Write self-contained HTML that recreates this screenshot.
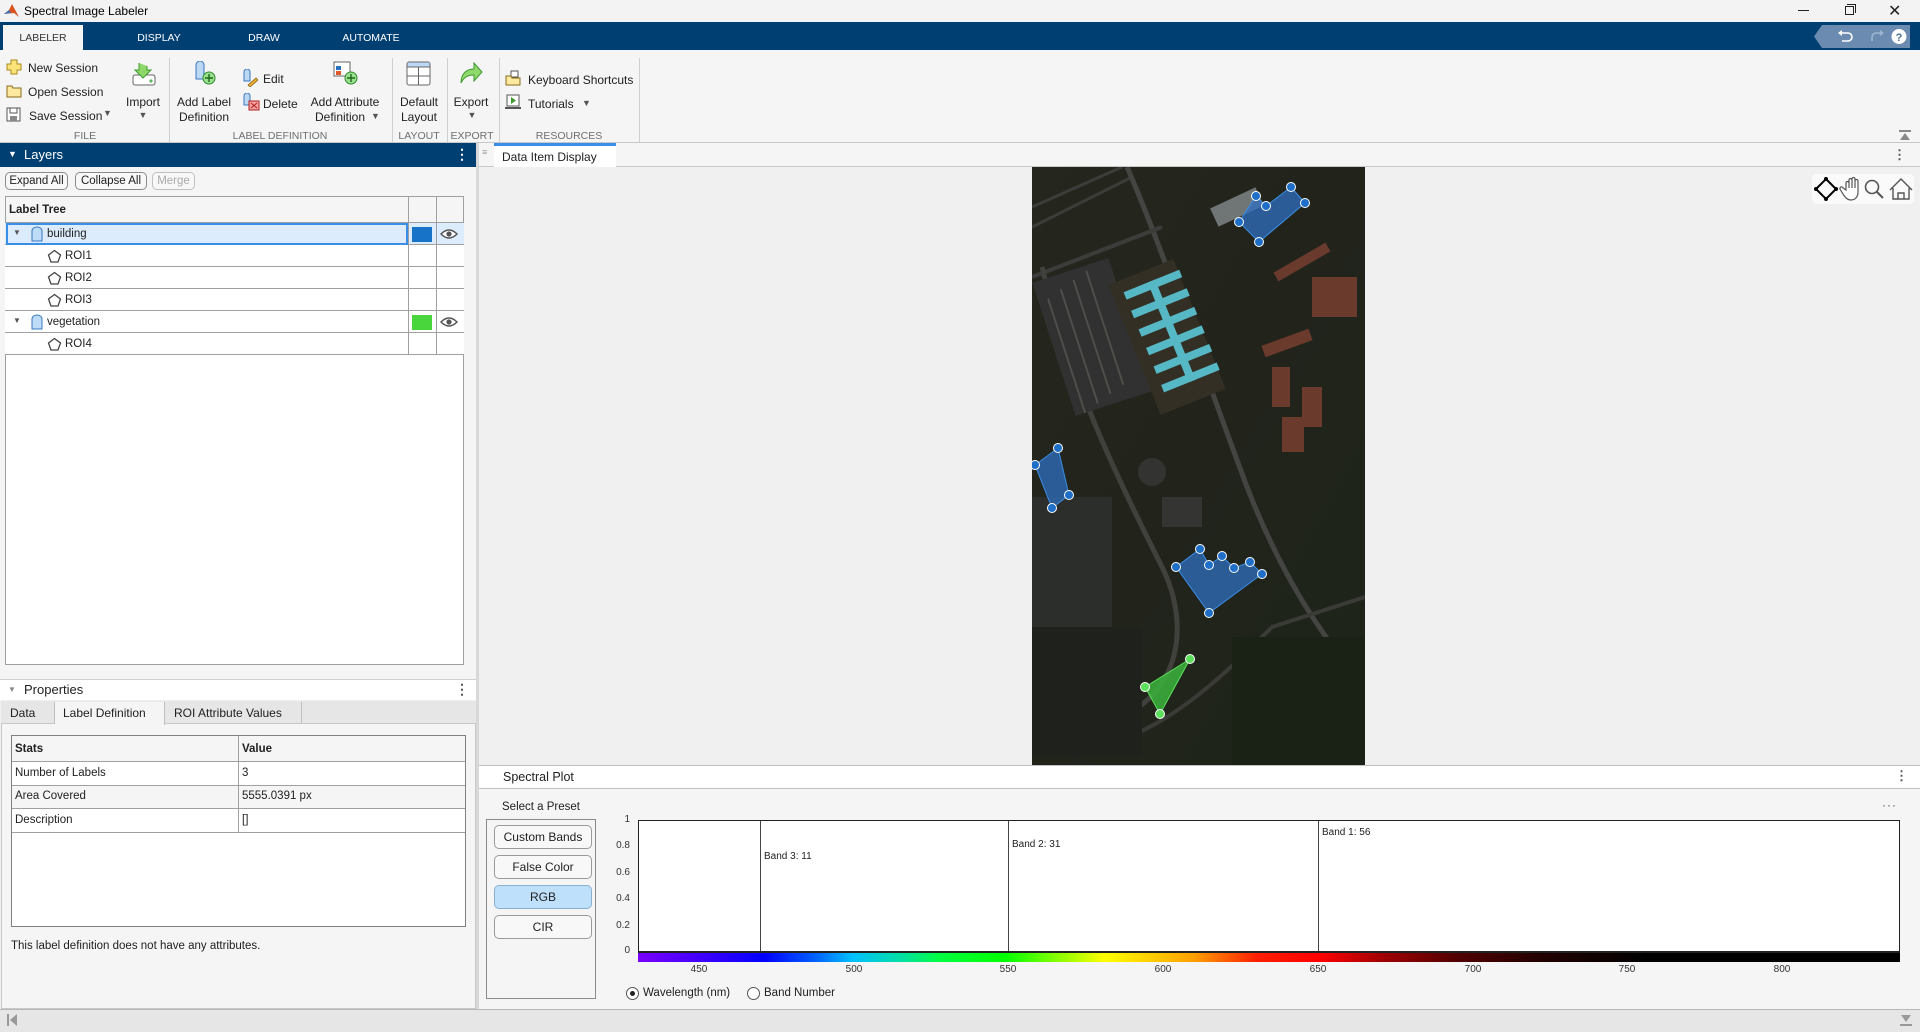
<!DOCTYPE html>
<html><head><meta charset="utf-8"><style>
*{box-sizing:border-box;margin:0;padding:0}
body{width:1920px;height:1032px;position:relative;overflow:hidden;background:#f0f0f0;font-family:"Liberation Sans",sans-serif;font-size:12px;color:#212121}
.a{position:absolute}
.t{position:absolute;white-space:nowrap}
.sep{position:absolute;top:58px;width:1px;height:84px;background:#d0d0d0}
.sec{position:absolute;top:130px;font-size:10.5px;color:#6e6e6e;transform:translateX(-50%)}
.ctr{transform:translateX(-50%);text-align:center}
.btn{position:absolute;height:18px;border:1px solid #8a8a8a;border-radius:5px;background:#f8f8f8;font-size:11.5px;text-align:center;line-height:16px}
.row{position:absolute;left:5px;width:459px;height:22px;border-bottom:1px solid #a0a0a0;background:#fff}
.row .c1{position:absolute;left:403px;top:0;width:1px;height:22px;background:#a0a0a0}
.row .c2{position:absolute;left:431px;top:0;width:1px;height:22px;background:#a0a0a0}
.pb{position:absolute;left:494px;width:98px;height:24px;border:1px solid #9a9a9a;border-radius:5px;background:#f8f8f8;text-align:center;line-height:22px;font-size:12px}
.yl{position:absolute;right:1290px;font-size:10px;color:#333}
.xl{position:absolute;top:964px;font-size:10px;color:#333;transform:translateX(-50%)}
</style></head><body>

<div class="a" style="left:0;top:0;width:1920px;height:22px;background:#f3f3f3"></div>
<svg class="a" style="left:4px;top:4px" width="15" height="14" viewBox="0 0 15 14"><path d="M0 10 L5 6 L8 0 L15 13 L10 9 Z" fill="#d9531e"/><path d="M0 10 L5 6 L7 9 Z" fill="#3c74b5"/></svg>
<div class="t" style="left:24px;top:4px;font-size:12px;color:#000">Spectral Image Labeler</div>
<div class="a" style="left:1798px;top:10px;width:11px;height:1px;background:#222"></div>
<div class="a" style="left:1845px;top:6px;width:9px;height:9px;border:1px solid #222"></div>
<div class="a" style="left:1847px;top:4px;width:9px;height:9px;border-top:1px solid #222;border-right:1px solid #222"></div>
<div class="t" style="left:1888px;top:1px;font-size:16px;color:#222">✕</div>

<div class="a" style="left:0;top:22px;width:1920px;height:28px;background:#003f72"></div>
<div class="a" style="left:3px;top:25px;width:80px;height:25px;background:#f5f5f5"></div>
<div class="t ctr" style="left:43px;top:32px;font-size:10.5px;color:#333">LABELER</div>
<div class="t ctr" style="left:159px;top:32px;font-size:10.5px;color:#fff">DISPLAY</div>
<div class="t ctr" style="left:264px;top:32px;font-size:10.5px;color:#fff">DRAW</div>
<div class="t ctr" style="left:371px;top:32px;font-size:10.5px;color:#fff">AUTOMATE</div>
<svg class="a" style="left:1814px;top:25px" width="96" height="23"><path d="M8 0 H96 V23 H8 L0 11.5 Z" fill="#6b8cb0"/><path d="M26 8 h8 a4 4 0 0 1 0 8 h-6" stroke="#fff" stroke-width="1.6" fill="none"/><path d="M24 8 l4 -3 v6 z" fill="#fff"/><path d="M58 16 v-4 a4 4 0 0 1 4 -4 h6" stroke="#9fb6cf" stroke-width="1.6" fill="none"/><path d="M70 8 l-4 -3 v6z" fill="#9fb6cf"/><circle cx="85" cy="11.5" r="7.5" fill="#fff"/><text x="85" y="16" font-size="11" font-weight="bold" text-anchor="middle" fill="#4a6f96" font-family="Liberation Sans">?</text></svg>

<div class="a" style="left:0;top:50px;width:1920px;height:93px;background:#f5f5f5;border-bottom:1px solid #c8c8c8"></div>
<svg class="a" style="left:6px;top:59px" width="16" height="16"><path d="M5 1h6v4h4v6h-4v4H5v-4H1V5h4z" fill="#fde47a" stroke="#a88a1a"/></svg>
<div class="t" style="left:28px;top:61px">New Session</div>
<svg class="a" style="left:6px;top:84px" width="16" height="14"><path d="M1 2h5l1 2h8v9H1z" fill="#fde9a0" stroke="#8a6a1a"/></svg>
<div class="t" style="left:28px;top:85px">Open Session</div>
<svg class="a" style="left:6px;top:107px" width="15" height="15"><rect x="1" y="1" width="13" height="13" fill="#fff" stroke="#555"/><rect x="4" y="1" width="7" height="5" fill="none" stroke="#555"/><rect x="4" y="9" width="7" height="5" fill="#888"/></svg>
<div class="t" style="left:29px;top:109px">Save Session</div>
<div class="t" style="left:103px;top:108px;font-size:9px;color:#555">▼</div>
<svg class="a" style="left:131px;top:61px" width="26" height="26"><rect x="2" y="14" width="22" height="10" rx="2" fill="#fff" stroke="#666"/><circle cx="20" cy="20" r="1.6" fill="#5cb85c"/><path d="M8 2 v7 h-4 l8 8 l8 -8 h-4 v-4" fill="#8fd86b" stroke="#3e9a2f"/></svg>
<div class="t ctr" style="left:143px;top:95px">Import</div>
<div class="t ctr" style="left:143px;top:110px;font-size:9px;color:#555">▼</div>
<div class="sep" style="left:169px"></div>
<svg class="a" style="left:193px;top:61px" width="26" height="26"><path d="M3 4 a4 4 0 0 1 8 0 v14 h-8z" fill="#bcd8f5" stroke="#3a78c0"/><circle cx="16" cy="17" r="6" fill="#9be08c" stroke="#2e8a2e"/><path d="M16 13v8M12 17h8" stroke="#1d6a1d" stroke-width="1.4"/></svg>
<div class="t ctr" style="left:204px;top:95px;line-height:15px">Add Label<br>Definition</div>
<svg class="a" style="left:242px;top:69px" width="16" height="18"><path d="M2 3 a3 3 0 0 1 6 0 v9 h-6z" fill="#bcd8f5" stroke="#3a78c0"/><path d="M6 16 l8 -7 l2 2 l-8 7 z" fill="#f0b030" stroke="#7a5a10" stroke-width=".7"/></svg>
<div class="t" style="left:263px;top:72px">Edit</div>
<svg class="a" style="left:242px;top:93px" width="18" height="18"><path d="M2 3 a3 3 0 0 1 6 0 v9 h-6z" fill="#bcd8f5" stroke="#3a78c0"/><rect x="7" y="8" width="10" height="9" fill="#f4a0a0" stroke="#b02020"/><path d="M9 10l6 5M15 10l-6 5" stroke="#b02020"/></svg>
<div class="t" style="left:263px;top:97px">Delete</div>
<svg class="a" style="left:333px;top:61px" width="26" height="26"><rect x="1" y="1" width="16" height="14" fill="#fff" stroke="#666"/><rect x="3" y="5" width="5" height="4" fill="#2a70c0"/><rect x="3" y="10" width="5" height="4" fill="#e0582a"/><circle cx="18" cy="17" r="6" fill="#9be08c" stroke="#2e8a2e"/><path d="M18 13v8M14 17h8" stroke="#1d6a1d" stroke-width="1.4"/></svg>
<div class="t ctr" style="left:345px;top:95px;line-height:15px">Add Attribute<br>Definition&nbsp;&nbsp;&nbsp;</div>
<div class="t" style="left:371px;top:111px;font-size:9px;color:#555">▼</div>
<div class="sep" style="left:392px"></div>
<svg class="a" style="left:406px;top:61px" width="26" height="26"><rect x="1" y="1" width="23" height="23" rx="2" fill="#fff" stroke="#666"/><rect x="1.5" y="1.5" width="22" height="4" fill="#bcd8f5"/><path d="M1 6h23M12.5 6v18M1 15h23" stroke="#666"/></svg>
<div class="t ctr" style="left:419px;top:95px;line-height:15px">Default<br>Layout</div>
<div class="sep" style="left:447px"></div>
<svg class="a" style="left:458px;top:61px" width="26" height="24"><path d="M3 22 c0 -10 6 -14 13 -14 v-6 l8 9 l-8 9 v-6 c-6 0 -10 2 -13 8z" fill="#8fd86b" stroke="#3e9a2f"/></svg>
<div class="t ctr" style="left:471px;top:95px">Export</div>
<div class="t ctr" style="left:472px;top:110px;font-size:9px;color:#555">▼</div>
<div class="sep" style="left:499px"></div>
<svg class="a" style="left:505px;top:70px" width="16" height="16"><rect x="6" y="1" width="7" height="6" fill="#fff" stroke="#555"/><path d="M1 6h5l1 2h8v7H1z" fill="#fde9a0" stroke="#8a6a1a"/></svg>
<div class="t" style="left:528px;top:73px">Keyboard Shortcuts</div>
<svg class="a" style="left:505px;top:94px" width="16" height="16"><rect x="2" y="1" width="12" height="11" fill="#fff" stroke="#555"/><path d="M6 3v7l5-3.5z" fill="#3e9a2f"/><path d="M0 14h16" stroke="#555" stroke-width="2"/></svg>
<div class="t" style="left:528px;top:97px">Tutorials</div>
<div class="t" style="left:582px;top:98px;font-size:9px;color:#555">▼</div>
<div class="sep" style="left:639px"></div>
<div class="sec" style="left:85px">FILE</div>
<div class="sec" style="left:280px">LABEL DEFINITION</div>
<div class="sec" style="left:419px">LAYOUT</div>
<div class="sec" style="left:472px">EXPORT</div>
<div class="sec" style="left:569px">RESOURCES</div>
<svg class="a" style="left:1899px;top:130px" width="12" height="10"><path d="M0 1h12" stroke="#888" stroke-width="2"/><path d="M1 10 L6 3 L11 10z" fill="#888"/></svg>

<div class="a" style="left:0;top:143px;width:476px;height:24px;background:#003f72"></div>
<div class="t" style="left:8px;top:149px;font-size:9px;color:#fff">▼</div>
<div class="t" style="left:24px;top:147px;font-size:13px;color:#fff">Layers</div>
<div class="t" style="left:455px;top:146px;font-size:14px;color:#fff;font-weight:bold">⋮</div>
<div class="a" style="left:0;top:167px;width:476px;height:512px;background:#f5f5f5"></div>
<div class="btn" style="left:5px;top:172px;width:63px">Expand All</div>
<div class="btn" style="left:75px;top:172px;width:72px">Collapse All</div>
<div class="btn" style="left:152px;top:172px;width:43px;color:#aaa;border-color:#c0c0c0">Merge</div>
<div class="a" style="left:5px;top:196px;width:459px;height:469px;background:#fff;border:1px solid #a0a0a0"></div>
<div class="a" style="left:5px;top:196px;width:459px;height:27px;background:#f5f5f5;border:1px solid #a0a0a0"></div>
<div class="a" style="left:408px;top:196px;width:1px;height:159px;background:#a0a0a0"></div>
<div class="a" style="left:436px;top:196px;width:1px;height:159px;background:#a0a0a0"></div>
<div class="t" style="left:9px;top:204px;font-weight:bold;font-size:11.5px">Label Tree</div>

<div class="row" style="top:223px;background:#dcecfc"><div class="c1"></div><div class="c2"></div></div>
<div class="a" style="left:6px;top:223px;width:402px;height:22px;border:2px solid #3a8ee6"></div>
<div class="a" style="left:412px;top:227px;width:20px;height:15px;background:#1673c8"></div>
<div class="row" style="top:245px"><div class="c1"></div><div class="c2"></div></div>
<div class="row" style="top:267px"><div class="c1"></div><div class="c2"></div></div>
<div class="row" style="top:289px"><div class="c1"></div><div class="c2"></div></div>
<div class="row" style="top:311px"><div class="c1"></div><div class="c2"></div></div>
<div class="a" style="left:412px;top:315px;width:20px;height:15px;background:#48d63c"></div>
<div class="row" style="top:333px"><div class="c1"></div><div class="c2"></div></div>
<svg class="a" style="left:440px;top:228px" width="18" height="12"><path d="M1 6 Q9 -2 17 6 Q9 14 1 6z" fill="#fff" stroke="#555" stroke-width="1.5"/><circle cx="9" cy="6" r="2.6" fill="#555"/></svg>
<svg class="a" style="left:440px;top:316px" width="18" height="12"><path d="M1 6 Q9 -2 17 6 Q9 14 1 6z" fill="#fff" stroke="#555" stroke-width="1.5"/><circle cx="9" cy="6" r="2.6" fill="#555"/></svg>
<div class="t" style="left:13px;top:228px;font-size:8px;color:#555">▼</div>
<svg class="a" style="left:31px;top:226px" width="12" height="16"><path d="M1 15V5a5 4 0 0 1 10 0v10z" fill="#bcdcf8" stroke="#3a78c0"/></svg>
<div class="t" style="left:47px;top:228px;font-size:11.5px">building</div>
<div class="t" style="left:13px;top:316px;font-size:8px;color:#555">▼</div>
<svg class="a" style="left:31px;top:314px" width="12" height="16"><path d="M1 15V5a5 4 0 0 1 10 0v10z" fill="#bcdcf8" stroke="#3a78c0"/></svg>
<div class="t" style="left:47px;top:316px;font-size:11.5px">vegetation</div>
<svg class="a" style="left:47px;top:249px" width="15" height="15"><path d="M7.5 1.5L13.5 6 11 13H4L1.5 6z" fill="#fff" stroke="#444" stroke-width="1.3"/></svg><div class="t" style="left:65px;top:250px;font-size:11.5px">ROI1</div>
<svg class="a" style="left:47px;top:271px" width="15" height="15"><path d="M7.5 1.5L13.5 6 11 13H4L1.5 6z" fill="#fff" stroke="#444" stroke-width="1.3"/></svg><div class="t" style="left:65px;top:272px;font-size:11.5px">ROI2</div>
<svg class="a" style="left:47px;top:293px" width="15" height="15"><path d="M7.5 1.5L13.5 6 11 13H4L1.5 6z" fill="#fff" stroke="#444" stroke-width="1.3"/></svg><div class="t" style="left:65px;top:294px;font-size:11.5px">ROI3</div>
<svg class="a" style="left:47px;top:337px" width="15" height="15"><path d="M7.5 1.5L13.5 6 11 13H4L1.5 6z" fill="#fff" stroke="#444" stroke-width="1.3"/></svg><div class="t" style="left:65px;top:338px;font-size:11.5px">ROI4</div>

<div class="a" style="left:0;top:679px;width:476px;height:21px;background:#fff;border-top:1px solid #d0d0d0"></div>
<div class="t" style="left:8px;top:685px;font-size:8px;color:#888">▼</div>
<div class="t" style="left:24px;top:682px;font-size:13px">Properties</div>
<div class="t" style="left:455px;top:681px;font-size:14px;color:#555;font-weight:bold">⋮</div>
<div class="a" style="left:1px;top:701px;width:475px;height:308px;background:#f5f5f5;border:1px solid #c8c8c8"></div>
<div class="a" style="left:1px;top:701px;width:475px;height:23px;background:#e6e6e6;border-bottom:1px solid #c8c8c8"></div>
<div class="a" style="left:54px;top:702px;width:1px;height:22px;background:#c0c0c0"></div>
<div class="a" style="left:55px;top:702px;width:110px;height:23px;background:#f5f5f5;border-right:1px solid #c0c0c0"></div>
<div class="a" style="left:301px;top:702px;width:1px;height:22px;background:#c0c0c0"></div>
<div class="t" style="left:10px;top:706px;font-size:12px">Data</div>
<div class="t" style="left:63px;top:706px;font-size:12px">Label Definition</div>
<div class="t" style="left:174px;top:706px;font-size:12px">ROI Attribute Values</div>
<div class="a" style="left:11px;top:735px;width:455px;height:192px;background:#fff;border:1px solid #808080"></div>
<div class="a" style="left:12px;top:736px;width:453px;height:26px;background:#f5f5f5;border-bottom:1px solid #a0a0a0"></div>
<div class="a" style="left:12px;top:785px;width:453px;height:23px;background:#f5f5f5"></div>
<div class="a" style="left:12px;top:785px;width:453px;height:1px;background:#a0a0a0"></div>
<div class="a" style="left:12px;top:808px;width:453px;height:1px;background:#a0a0a0"></div>
<div class="a" style="left:12px;top:832px;width:453px;height:1px;background:#a0a0a0"></div>
<div class="a" style="left:238px;top:736px;width:1px;height:96px;background:#a0a0a0"></div>
<div class="t" style="left:15px;top:743px;font-weight:bold;font-size:11.5px">Stats</div>
<div class="t" style="left:242px;top:743px;font-weight:bold;font-size:11.5px">Value</div>
<div class="t" style="left:15px;top:767px;font-size:11.5px">Number of Labels</div><div class="t" style="left:242px;top:767px;font-size:11.5px">3</div>
<div class="t" style="left:15px;top:790px;font-size:11.5px">Area Covered</div><div class="t" style="left:242px;top:790px;font-size:11.5px">5555.0391 px</div>
<div class="t" style="left:15px;top:814px;font-size:11.5px">Description</div><div class="t" style="left:242px;top:814px;font-size:11.5px">[]</div>
<div class="t" style="left:11px;top:940px;font-size:11.5px">This label definition does not have any attributes.</div>

<div class="a" style="left:476px;top:143px;width:3px;height:866px;background:#d8d8d8"></div>

<div class="a" style="left:0;top:1009px;width:1920px;height:23px;background:#e6e6e6;border-top:1px solid #b8b8b8"></div>
<svg class="a" style="left:7px;top:1014px" width="10" height="12"><path d="M1 0v12" stroke="#999" stroke-width="2"/><path d="M10 0v12L3 6z" fill="#999"/></svg>
<svg class="a" style="left:1900px;top:1014px" width="12" height="12"><path d="M1 1h10L6 8z" fill="#999"/><path d="M0 11h12" stroke="#999" stroke-width="2"/></svg>

<div class="a" style="left:479px;top:143px;width:1441px;height:24px;background:#f5f5f5;border-bottom:1px solid #c8c8c8"></div>
<div class="t" style="left:482px;top:147px;font-size:9px;color:#999">≡</div>
<div class="a" style="left:494px;top:143px;width:122px;height:25px;background:#fff;border-top:3px solid #3a8ee6"></div>
<div class="t" style="left:502px;top:150px;font-size:12px">Data Item Display</div>
<div class="t" style="left:1893px;top:147px;font-size:13px;color:#555;font-weight:bold">⋮</div>
<div class="a" style="left:479px;top:167px;width:1441px;height:598px;background:#f0f0f0"></div>
<div class="a" style="left:1812px;top:174px;width:102px;height:30px;background:#fafafa;border-radius:5px"></div>
<svg class="a" style="left:1814px;top:176px" width="100" height="26"><path d="M12 3L22 13 12 23 2 13z" fill="none" stroke="#000" stroke-width="2"/><circle cx="12" cy="3" r="2" /><circle cx="22" cy="13" r="2"/><circle cx="12" cy="23" r="2"/><circle cx="2" cy="13" r="2"/><path d="M32 14 v-7 a1.5 1.5 0 0 1 3 0 v5 v-8 a1.5 1.5 0 0 1 3 0 v8 v-9 a1.5 1.5 0 0 1 3 0 v9 v-7 a1.5 1.5 0 0 1 3 0 v11 c0 5 -3 8 -7 8 c-4 0 -6 -3 -8 -6 l-3 -5 a1.5 1.5 0 0 1 3 -1z" fill="#fff" stroke="#555" stroke-width="1.2"/><circle cx="58" cy="11" r="6.5" fill="none" stroke="#555" stroke-width="1.6"/><path d="M63 16l6 6" stroke="#555" stroke-width="2"/><path d="M76 14 L87 3 L98 14 M79 12v11h16v-11 M84 23v-6h6v6" fill="none" stroke="#555" stroke-width="1.4"/></svg>

<svg class="a" style="left:1032px;top:167px" width="333" height="598" viewBox="0 0 333 598">
<defs><linearGradient id="bg" x1="0" y1="0" x2="1" y2="1"><stop offset="0" stop-color="#25271f"/><stop offset=".5" stop-color="#22241c"/><stop offset="1" stop-color="#1c2418"/></linearGradient></defs>
<rect width="333" height="598" fill="url(#bg)"/>
<path d="M0 40 L90 0 M0 60 L100 10" stroke="#3c3c3a" stroke-width="3"/>
<path d="M95 0 C130 80 170 200 215 320 C250 410 290 470 333 520" stroke="#444442" stroke-width="5" fill="none"/>
<path d="M0 110 L130 60" stroke="#3c3c3a" stroke-width="4"/>
<path d="M10 100 C40 220 90 320 130 400 C160 460 150 540 60 560 C20 565 0 540 0 530" stroke="#40403c" stroke-width="5" fill="none"/>
<path d="M0 580 C100 600 180 520 240 460 L333 430" stroke="#3a3a36" stroke-width="4" fill="none"/>
<rect x="20" y="100" width="80" height="140" fill="#303130" transform="rotate(-18 60 170)"/>
<path d="M30 120 v120 M45 115 v120 M60 110 v120 M75 105 v120" stroke="#4e4e4a" stroke-width="2" transform="rotate(-18 60 170)"/>
<rect x="100" y="100" width="70" height="140" fill="#332f25" transform="rotate(-22 135 170)"/>
<g fill="#56b8c4" transform="rotate(-22 140 165)"><rect x="110" y="110" width="60" height="8"/><rect x="110" y="130" width="60" height="8"/><rect x="110" y="150" width="60" height="8"/><rect x="110" y="170" width="60" height="8"/><rect x="110" y="190" width="60" height="8"/><rect x="110" y="210" width="60" height="8"/><rect x="136" y="110" width="8" height="108"/></g>
<rect x="180" y="30" width="50" height="20" fill="#707676" transform="rotate(-25 205 40)"/>
<g fill="#6a3a2c"><rect x="240" y="90" width="60" height="10" transform="rotate(-30 270 95)"/><rect x="280" y="110" width="45" height="40"/><rect x="230" y="170" width="50" height="12" transform="rotate(-20 255 176)"/><rect x="240" y="200" width="18" height="40"/><rect x="270" y="220" width="20" height="40"/><rect x="250" y="250" width="22" height="35"/></g>
<rect x="280" y="500" width="45" height="30" fill="#322a2a"/><rect x="0" y="330" width="80" height="130" fill="#2c2e2b"/>
<rect x="0" y="460" width="110" height="130" fill="#1e211c"/><rect x="200" y="470" width="133" height="128" fill="#1a2216"/>
<circle cx="120" cy="305" r="14" fill="#333331"/><rect x="130" y="330" width="40" height="30" fill="#343432"/>
<path d="M26 281 L3 298 L20 341 L37 328Z" fill="#2f6fc0" fill-opacity=".75" stroke="#3a8ee6"/>
<path d="M224 29 L234 39 L259 20 L273 36 L227 75 L207 55Z" fill="#2f6fc0" fill-opacity=".75" stroke="#3a8ee6"/>
<path d="M168 382 L177 398 L190 389 L202 401 L218 395 L230 407 L177 446 L144 400Z" fill="#2f6fc0" fill-opacity=".75" stroke="#3a8ee6"/>
<path d="M158 492 L113 520 L128 547Z" fill="#3cb43c" fill-opacity=".85" stroke="#5ce05c"/>
<g fill="#1f6fc8" stroke="#fff" stroke-width="1"><circle cx="26" cy="281" r="4.5"/><circle cx="3" cy="298" r="4.5"/><circle cx="20" cy="341" r="4.5"/><circle cx="37" cy="328" r="4.5"/>
<circle cx="224" cy="29" r="4.5"/><circle cx="234" cy="39" r="4.5"/><circle cx="259" cy="20" r="4.5"/><circle cx="273" cy="36" r="4.5"/><circle cx="227" cy="75" r="4.5"/><circle cx="207" cy="55" r="4.5"/>
<circle cx="168" cy="382" r="4.5"/><circle cx="177" cy="398" r="4.5"/><circle cx="190" cy="389" r="4.5"/><circle cx="202" cy="401" r="4.5"/><circle cx="218" cy="395" r="4.5"/><circle cx="230" cy="407" r="4.5"/><circle cx="177" cy="446" r="4.5"/><circle cx="144" cy="400" r="4.5"/></g>
<g fill="#5ce05c" stroke="#fff" stroke-width="1"><circle cx="158" cy="492" r="4.5"/><circle cx="113" cy="520" r="4.5"/><circle cx="128" cy="547" r="4.5"/></g>
</svg>

<div class="a" style="left:479px;top:765px;width:1441px;height:24px;background:#fff;border-top:1px solid #c0c0c0;border-bottom:1px solid #c0c0c0"></div>
<div class="t" style="left:503px;top:770px;font-size:12.5px">Spectral Plot</div>
<div class="t" style="left:1895px;top:768px;font-size:13px;color:#555;font-weight:bold">⋮</div>
<div class="a" style="left:479px;top:789px;width:1441px;height:220px;background:#f5f5f5"></div>
<div class="t" style="left:502px;top:801px;font-size:11.5px">Select a Preset</div>
<div class="t" style="left:1882px;top:798px;font-size:12px;color:#555;letter-spacing:1px">···</div>
<div class="a" style="left:486px;top:819px;width:110px;height:180px;border:1px solid #8a8a8a;background:#f5f5f5"></div>
<div class="pb" style="top:825px">Custom Bands</div>
<div class="pb" style="top:855px">False Color</div>
<div class="pb" style="top:885px;background:#bfe0fa;border-color:#8ab0d0">RGB</div>
<div class="pb" style="top:915px">CIR</div>
<div class="a" style="left:638px;top:820px;width:1262px;height:132px;background:#fff;border:1px solid #222"></div>
<div class="a" style="left:760px;top:821px;width:1px;height:130px;background:#444"></div>
<div class="a" style="left:1008px;top:821px;width:1px;height:130px;background:#444"></div>
<div class="a" style="left:1318px;top:821px;width:1px;height:130px;background:#444"></div>
<div class="t" style="left:764px;top:851px;font-size:10px">Band 3: 11</div>
<div class="t" style="left:1012px;top:839px;font-size:10px">Band 2: 31</div>
<div class="t" style="left:1322px;top:827px;font-size:10px">Band 1: 56</div>
<div class="a" style="left:638px;top:951px;width:1262px;height:2px;background:#222"></div>
<div class="a" style="left:638px;top:953px;width:1262px;height:9px;background:linear-gradient(to right,#7a00ff 0%,#4000ff 5%,#0000ff 10%,#0060ff 14%,#00c0ff 17%,#00e0a0 21%,#00ff40 24%,#00ff00 29%,#80ff00 33%,#ffff00 37%,#ffa000 44%,#ff2000 49%,#ff0000 54%,#a00000 59%,#500000 65%,#200000 72%,#000000 80%,#000 100%)"></div>
<div class="yl" style="top:814px">1</div>
<div class="yl" style="top:840px">0.8</div>
<div class="yl" style="top:867px">0.6</div>
<div class="yl" style="top:893px">0.4</div>
<div class="yl" style="top:920px">0.2</div>
<div class="yl" style="top:945px">0</div>
<div class="xl" style="left:699px">450</div>
<div class="xl" style="left:854px">500</div>
<div class="xl" style="left:1008px">550</div>
<div class="xl" style="left:1163px">600</div>
<div class="xl" style="left:1318px">650</div>
<div class="xl" style="left:1473px">700</div>
<div class="xl" style="left:1627px">750</div>
<div class="xl" style="left:1782px">800</div>
<div class="a" style="left:626px;top:987px;width:13px;height:13px;border:1px solid #555;border-radius:50%;background:#fff"></div>
<div class="a" style="left:630px;top:991px;width:5px;height:5px;border-radius:50%;background:#222"></div>
<div class="t" style="left:643px;top:987px;font-size:11.5px">Wavelength (nm)</div>
<div class="a" style="left:747px;top:987px;width:13px;height:13px;border:1px solid #555;border-radius:50%;background:#fff"></div>
<div class="t" style="left:764px;top:987px;font-size:11.5px">Band Number</div>
</body></html>
